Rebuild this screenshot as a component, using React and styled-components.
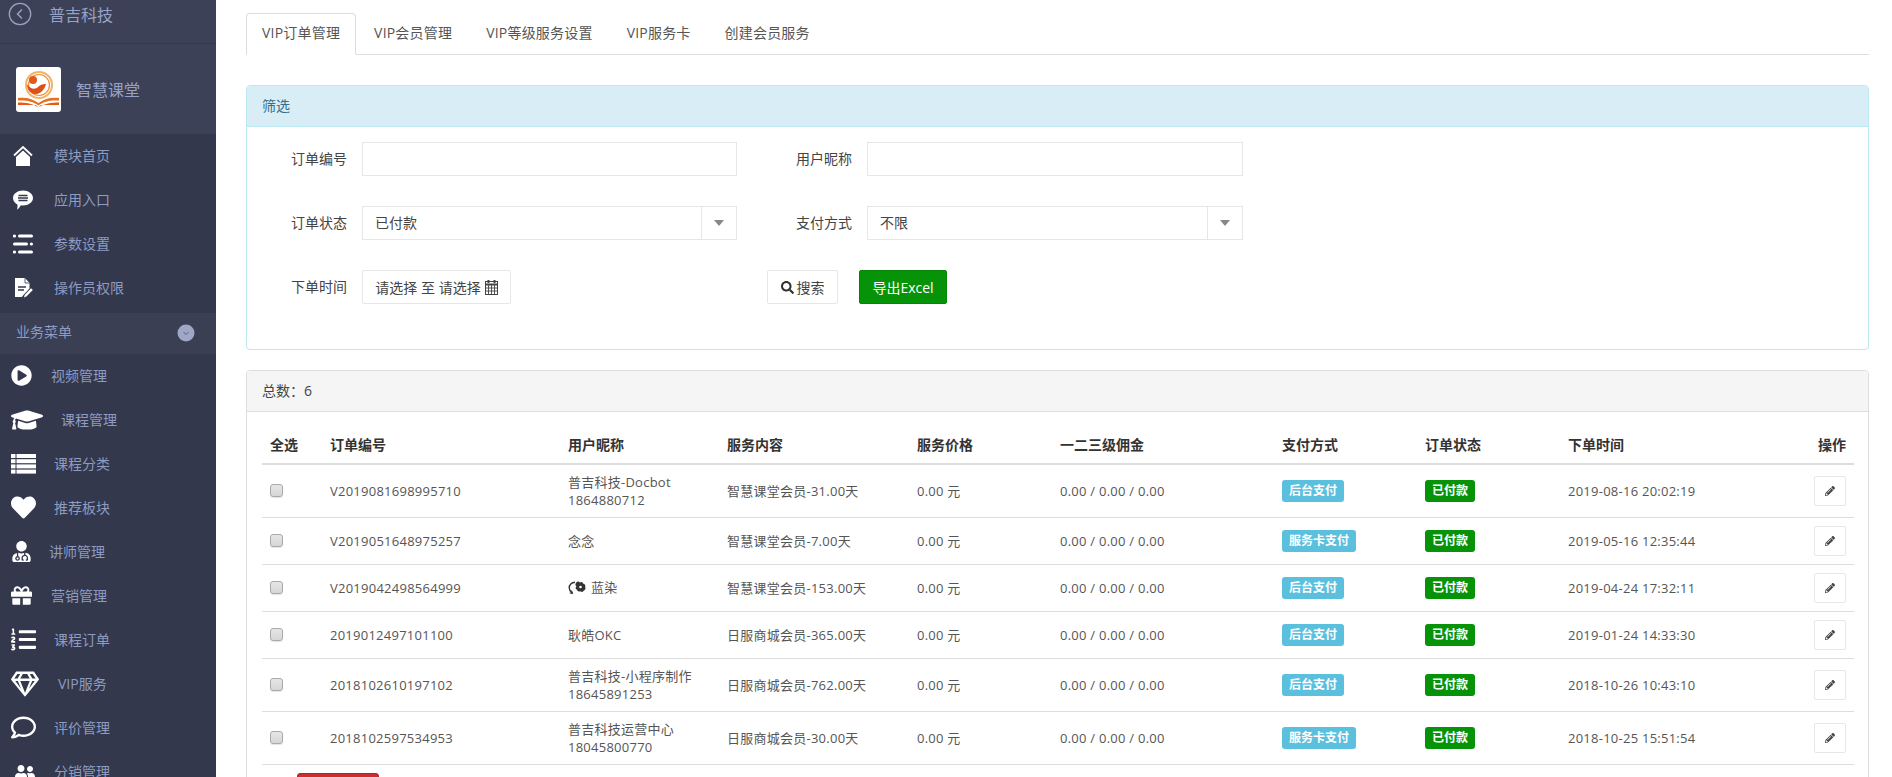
import React from "react"
import styled, { createGlobalStyle } from "styled-components"
import {
  FaPlayCircle, FaGraduationCap, FaHeart, FaUserMd, FaGift, FaListOl, FaRegGem,
  FaRegComment, FaUserFriends, FaSearch, FaPencilAlt,
} from "react-icons/fa"

const Global = createGlobalStyle`
  html, body { margin: 0; padding: 0; background: #fff; }
  body {
    font-family: "Open Sans", "Noto Sans CJK SC", sans-serif;
    font-size: 14px;
    color: #555;
  }
  * { box-sizing: border-box; }
`

// drawn icons, the fa ones from the package don't have these shapes
const HomeIcon = () => (
  <svg width="20" height="20" viewBox="0 0 20 20" fill="#fff">
    <path d="M1 9.500 10 1l9 8.500" fill="none" stroke="#fff" strokeWidth="1.800" />
    <path d="M10 4.500 17 11v9H3v-9z" />
  </svg>
)

const BubbleIcon = () => (
  <svg width="20" height="20" viewBox="0 0 20 20">
    <path d="M10 0.500c5.500 0 10 3.200 10 7.500s-4.500 7.500-10 7.500c-.8 0-1.500 0-2.200-.2C6.800 17.500 5.300 19 4 19.500c.5-1.300.6-3 .4-5C1.800 13.300 0 10.800 0 8c0-4.300 4.500-7.500 10-7.500z" fill="#fff" />
    <path d="M5.500 5.500h9M5 8h10M5.500 10.500h9" stroke="#33384c" strokeWidth="1.300" />
  </svg>
)

const LinesIcon = () => (
  <svg width="20" height="20" viewBox="0 0 20 20" fill="#fff">
    <circle cx="1.500" cy="2" r="1.600" />
    <rect x="5" y="0.500" width="15" height="3" rx="1.500" />
    <rect x="0" y="8.500" width="15" height="3" rx="1.500" />
    <circle cx="18.400" cy="10" r="1.600" />
    <circle cx="1.500" cy="18" r="1.600" />
    <rect x="5" y="16.500" width="15" height="3" rx="1.500" />
  </svg>
)

const FileEditIcon = () => (
  <svg width="19" height="20" viewBox="0 0 19 20">
    <path d="M1 0h10l4.500 5v5.500L8.500 18 8 19H1z" fill="#fff" />
    <path d="M11 0v5h4.500" fill="none" stroke="#33384c" strokeWidth=".8" />
    <path d="M4 9h8M4 12h6" stroke="#33384c" strokeWidth="1.500" />
    <path d="M10 19.500l.6-2.600 6.500-6.600 1.700 1.800-6.400 6.500z" fill="#fff" />
  </svg>
)

const FourRowsIcon = () => (
  <svg width="25" height="20" viewBox="0 0 25 20" fill="#fff">
    {[0, 5.200, 10.400, 15.600].map(y => (
      <g key={y}>
        <rect x="0" y={y} width="4.500" height="4" />
        <rect x="5.500" y={y} width="19.500" height="4" />
      </g>
    ))}
  </svg>
)

const BackIcon = () => (
  <svg width="24" height="24" viewBox="0 0 24 24" fill="none" stroke="#9aa1c2">
    <circle cx="12" cy="12" r="10.700" strokeWidth="1.300" />
    <path d="M14 7.500 9.500 12l4.500 4.500" strokeWidth="1.500" />
  </svg>
)

const DownDot = () => (
  <svg width="18" height="18" viewBox="0 0 18 18">
    <circle cx="9" cy="9" r="8.500" fill="#a0a6c6" />
    <path d="M6.500 8 9 10.500 11.500 8" fill="none" stroke="#5a6080" strokeWidth="1" />
  </svg>
)

const CalendarIcon = () => (
  <svg width="13" height="15" viewBox="0 0 13 15" fill="none" stroke="#444">
    <path d="M3.500 0v3M9.500 0v3" strokeWidth="2" />
    <rect x=".5" y="1.500" width="12" height="13" />
    <path d="M.5 4.500h12" strokeWidth="2" />
    <path d="M.5 8h12M.5 11h12M3.500 5v9M6.500 5v9M9.500 5v9" strokeWidth=".9" />
  </svg>
)

const AppLogo = () => (
  <svg width="45" height="45" viewBox="0 0 45 45">
    <rect width="45" height="45" rx="3" fill="#fff" />
    <circle cx="23" cy="18" r="13" fill="none" stroke="#f2b366" strokeWidth="2" />
    <circle cx="23" cy="18" r="10.500" fill="none" stroke="#ef8f3a" strokeWidth="1.200" />
    <circle cx="17" cy="13" r="4" fill="#e05a1c" />
    <path d="M11 17c3 5 8 6 11 3 2-2 4-3 8-3-1 5-5 9.500-10 10S11 23 11 17z" fill="#dc4f18" />
    <path d="M2 31c7-1 14 0 20.500 5C29 31 36 30 43 31v2.500c-8-.5-15 .5-20.500 5C17 34 9 33 2 33.500z" fill="#e8701f" />
    <path d="M2 35.500c8 0 15 1 20.500 5 5.500-4 13-5 20.500-5V38H25l-2.500 2.500L20 38H2z" fill="#e25c18" />
  </svg>
)

const SmallFlower = () => (
  <svg width="18" height="13" viewBox="0 0 18 13">
    <path d="M7 1.200C3.500 1.200 1.200 4 1.200 6.800c0 2 1 3.700 3 5.400" fill="none" stroke="#333" strokeWidth="1.400" />
    <path d="M3.600 9.500 4.600 12.500 1.800 12" fill="none" stroke="#333" strokeWidth="1" />
    <path d="M12 1.500a2.300 2.300 0 0 1 3.300 1.300 2.300 2.300 0 0 1 1.800 3.300 2.300 2.300 0 0 1-1.200 3.400 2.300 2.300 0 0 1-3.500.7 2.300 2.300 0 0 1-3.400-1.400 2.300 2.300 0 0 1-.6-3.500A2.300 2.300 0 0 1 12 1.500z" fill="#333" />
    <circle cx="12.500" cy="6" r="1.300" fill="#fff" />
  </svg>
)

const mainMenu = [
  { name: "模块首页", left: 13, text: 54, icon: <HomeIcon /> },
  { name: "应用入口", left: 13, text: 54, icon: <BubbleIcon /> },
  { name: "参数设置", left: 13, text: 54, icon: <LinesIcon /> },
  { name: "操作员权限", left: 14, text: 54, icon: <FileEditIcon /> },
]

const bizMenu = [
  { name: "视频管理", left: 11, text: 51, icon: <FaPlayCircle size={21} color="#fff" /> },
  { name: "课程管理", left: 11, text: 61, icon: <FaGraduationCap size={32} color="#fff" /> },
  { name: "课程分类", left: 11, text: 54, icon: <FourRowsIcon /> },
  { name: "推荐板块", left: 11, text: 54, icon: <FaHeart size={25} color="#fff" /> },
  { name: "讲师管理", left: 11, text: 49, icon: <FaUserMd size={21} color="#fff" /> },
  { name: "营销管理", left: 11, text: 51, icon: <FaGift size={21} color="#fff" /> },
  { name: "课程订单", left: 11, text: 54, icon: <FaListOl size={25} color="#fff" /> },
  { name: "VIP服务", left: 11, text: 58, icon: <FaRegGem size={28} color="#fff" /> },
  { name: "评价管理", left: 11, text: 54, icon: <FaRegComment size={25} color="#fff" /> },
  { name: "分销管理", left: 15, text: 54, icon: <FaUserFriends size={20} color="#fff" /> },
]

const orders = [
  { id: "V2019081698995710", user: ["普吉科技-Docbot", "1864880712"], service: "智慧课堂会员-31.00天", pay: "后台支付", time: "2019-08-16 20:02:19" },
  { id: "V2019051648975257", user: ["念念"], service: "智慧课堂会员-7.00天", pay: "服务卡支付", time: "2019-05-16 12:35:44" },
  { id: "V2019042498564999", user: ["蓝染"], flower: true, service: "智慧课堂会员-153.00天", pay: "后台支付", time: "2019-04-24 17:32:11" },
  { id: "2019012497101100", user: ["耿皓OKC"], service: "日服商城会员-365.00天", pay: "后台支付", time: "2019-01-24 14:33:30" },
  { id: "2018102610197102", user: ["普吉科技-小程序制作", "18645891253"], service: "日服商城会员-762.00天", pay: "后台支付", time: "2018-10-26 10:43:10" },
  { id: "2018102597534953", user: ["普吉科技运营中心", "18045800770"], service: "日服商城会员-30.00天", pay: "服务卡支付", time: "2018-10-25 15:51:54" },
]

const tabs = ["VIP订单管理", "VIP会员管理", "VIP等级服务设置", "VIP服务卡", "创建会员服务"]

const columns = [60, 238, 159, 190, 143, 222, 143, 143, 200, 94]

export default function App() {
  return (
    <Page>
      <Global />
      <Sidebar>
        <TopBar>
          <BackIcon />
          <TopTitle>普吉科技</TopTitle>
        </TopBar>
        <Brand>
          <AppLogo />
          <BrandName>智慧课堂</BrandName>
        </Brand>
        <Menu>
          {mainMenu.map(m => (
            <NavItem key={m.name} $left={m.left} $text={m.text}>
              <NavIcon>{m.icon}</NavIcon>
              {m.name}
            </NavItem>
          ))}
        </Menu>
        <GroupHead>
          <GroupLabel>业务菜单</GroupLabel>
          <DownDot />
        </GroupHead>
        <Menu>
          {bizMenu.map(m => (
            <NavItem key={m.name} $left={m.left} $text={m.text}>
              <NavIcon>{m.icon}</NavIcon>
              {m.name}
            </NavItem>
          ))}
        </Menu>
      </Sidebar>

      <Main>
        <TabBar>
          {tabs.map((t, i) => <Tab key={t} $active={i === 0}>{t}</Tab>)}
        </TabBar>

        <FilterPanel>
          <FilterHead>筛选</FilterHead>
          <FilterForm>
            <Label>订单编号</Label>
            <Input />
            <Label>用户昵称</Label>
            <Input />

            <Label>订单状态</Label>
            <Select>
              <SelectValue>已付款</SelectValue>
              <SelectArrow />
            </Select>
            <Label>支付方式</Label>
            <Select>
              <SelectValue>不限</SelectValue>
              <SelectArrow />
            </Select>

            <Label>下单时间</Label>
            <DateButton>请选择 至 请选择 <CalendarIcon /></DateButton>
            <Actions>
              <SearchButton><FaSearch size={13} color="#333" /> 搜索</SearchButton>
              <ExportButton>导出Excel</ExportButton>
            </Actions>
          </FilterForm>
        </FilterPanel>

        <ListPanel>
          <ListHead>总数：6</ListHead>
          <ListBody>
            <OrderTable>
              <colgroup>
                {columns.map((w, i) => <Col key={i} $w={w} />)}
              </colgroup>
              <thead>
                <tr>
                  <Th>全选</Th>
                  <Th>订单编号</Th>
                  <Th>用户昵称</Th>
                  <Th>服务内容</Th>
                  <Th>服务价格</Th>
                  <Th>一二三级佣金</Th>
                  <Th>支付方式</Th>
                  <Th>订单状态</Th>
                  <Th>下单时间</Th>
                  <Th $right>操作</Th>
                </tr>
              </thead>
              <tbody>
                {orders.map(o => (
                  <tr key={o.id}>
                    <Td><Check type="checkbox" /></Td>
                    <Td>{o.id}</Td>
                    <Td>
                      {o.flower && <FlowerWrap><SmallFlower /></FlowerWrap>}
                      {o.user[0]}
                      {o.user[1] && <><br />{o.user[1]}</>}
                    </Td>
                    <Td>{o.service}</Td>
                    <Td>0.00 元</Td>
                    <Td>0.00 / 0.00 / 0.00</Td>
                    <Td><Badge $color="#5bc0de">{o.pay}</Badge></Td>
                    <Td><Badge $color="#079307">已付款</Badge></Td>
                    <Td>{o.time}</Td>
                    <Td $right><EditButton><FaPencilAlt size={10} color="#444" /></EditButton></Td>
                  </tr>
                ))}
              </tbody>
            </OrderTable>
            <DeleteButton />
          </ListBody>
        </ListPanel>
      </Main>
    </Page>
  )
}

const Page = styled.div`
  display: flex;
  height: 100vh;
  overflow: hidden;
`

const Sidebar = styled.aside`
  width: 216px;
  flex: none;
  background: #33384c;
  color: #8e9bc2;
  overflow: hidden;
`

const TopBar = styled.div`
  height: 44px;
  padding: 2px 0 0 8px;
  display: flex;
  align-items: flex-start;
  gap: 17px;
  background: #3c4157;
  border-bottom: 1px solid #32364a;
`

const TopTitle = styled.span`
  font-size: 16px;
  line-height: 26px;
  color: #97a3c6;
`

const Brand = styled.div`
  height: 90px;
  padding-left: 16px;
  display: flex;
  align-items: center;
  gap: 15px;
  background: #3c4157;
`

const BrandName = styled.span`
  font-size: 16px;
  color: #97a3c6;
`

const Menu = styled.nav`
  display: block;
`

const NavItem = styled.a`
  height: 44px;
  display: grid;
  grid-template-columns: ${p => p.$text - p.$left}px 1fr;
  align-items: center;
  padding-left: ${p => p.$left}px;
  padding-bottom: 1px;
  font-size: 14px;
  line-height: 20px;
`

const NavIcon = styled.span`
  display: flex;
  align-items: center;
`

const GroupHead = styled.div`
  height: 41px;
  margin-top: 3px;
  padding: 0 21px 2px 16px;
  display: flex;
  align-items: center;
  justify-content: space-between;
  background: #3a3f54;
  font-size: 14px;
`

const GroupLabel = styled.span`
  line-height: 20px;
  padding-bottom: 2px;
`

const Main = styled.main`
  flex: 1;
  min-width: 0;
  padding: 13px 23px 0 30px;
`

const TabBar = styled.div`
  display: flex;
  gap: 2px;
  height: 42px;
  border-bottom: 1px solid #ddd;
`

const Tab = styled.a`
  height: 42px;
  padding: 9px 15px 11px;
  line-height: 20px;
  letter-spacing: .2px;
  border: 1px solid ${p => (p.$active ? "#ddd" : "transparent")};
  border-bottom-color: ${p => (p.$active ? "#fff" : "transparent")};
  border-radius: 4px 4px 0 0;
  color: #555;
`

const FilterPanel = styled.section`
  margin-top: 30px;
  height: 265px;
  border: 1px solid #bce8f1;
  border-radius: 4px;
`

const FilterHead = styled.div`
  height: 41px;
  padding: 10px 15px;
  line-height: 20px;
  background: #d9edf7;
  border-bottom: 1px solid #bce8f1;
  color: #31708f;
  border-radius: 3px 3px 0 0;
`

const FilterForm = styled.div`
  display: grid;
  grid-template-columns: 100px 375px 100px 376px;
  column-gap: 15px;
  row-gap: 30px;
  grid-auto-rows: 34px;
  padding-top: 15px;
`

const Label = styled.label`
  line-height: 34px;
  text-align: right;
  color: #444;
`

const Input = styled.input`
  height: 34px;
  border: 1px solid #e5e6e7;
  background: #fff;
  outline: none;
  width: 100%;
`

const Select = styled.div`
  height: 34px;
  display: flex;
  border: 1px solid #e5e6e7;
`

const SelectValue = styled.span`
  flex: 1;
  padding-left: 12px;
  line-height: 32px;
  color: #444;
  border-right: 1px solid #e5e6e7;
`

const SelectArrow = styled.span`
  width: 34px;
  display: flex;
  align-items: center;
  justify-content: center;
  &::after {
    content: "";
    border: 5px solid transparent;
    border-top: 6px solid #888;
    border-bottom: 0;
  }
`

const Btn = styled.button`
  height: 34px;
  border-radius: 2px;
  font: inherit;
  cursor: pointer;
`

const DateButton = styled(Btn)`
  width: 149px;
  padding: 0;
  justify-self: start;
  background: #fff;
  border: 1px solid #e7e7e7;
  color: #444;
  display: flex;
  align-items: center;
  justify-content: center;
  gap: 4px;
`

const Actions = styled.div`
  grid-column: 3 / 5;
  display: flex;
  gap: 21px;
`

const SearchButton = styled(Btn)`
  margin-left: 15px;
  width: 71px;
  padding: 0;
  background: #fff;
  border: 1px solid #e7e7e7;
  color: #444;
  display: flex;
  align-items: center;
  justify-content: center;
  gap: 3px;
`

const ExportButton = styled(Btn)`
  width: 88px;
  padding: 0;
  background: #079307;
  border: 1px solid #068506;
  color: #fff;
`

const ListPanel = styled.section`
  margin-top: 20px;
  border: 1px solid #ddd;
  border-radius: 4px;
`

const ListHead = styled.div`
  height: 41px;
  padding: 10px 15px;
  line-height: 20px;
  background: #f5f5f5;
  border-bottom: 1px solid #ddd;
  color: #444;
  border-radius: 3px 3px 0 0;
`

const ListBody = styled.div`
  padding: 15px;
`

const OrderTable = styled.table`
  width: 100%;
  table-layout: fixed;
  border-collapse: separate;
  border-spacing: 0;
`

const Col = styled.col`
  width: ${p => p.$w}px;
`

const Th = styled.th`
  padding: 8px;
  height: 38px;
  line-height: 20px;
  font-size: 14px;
  font-weight: 600;
  color: #333;
  text-align: ${p => (p.$right ? "right" : "left")};
  border-bottom: 2px solid #ddd;
  white-space: nowrap;
`

const Td = styled.td`
  padding: 8px;
  height: 47px;
  font-size: 13px;
  line-height: 18px;
  letter-spacing: .25px;
  color: #555;
  text-align: ${p => (p.$right ? "right" : "left")};
  vertical-align: middle;
  border-bottom: 1px solid #ddd;
  white-space: nowrap;
`

const Check = styled.input`
  appearance: none;
  display: block;
  width: 13px;
  height: 13px;
  margin: -2px 0 0;
  border: 1px solid #a9a9a9;
  border-radius: 3px;
  background: linear-gradient(#e6e6e6, #d6d6d6);
  box-shadow: 0 1px 1px #e4e4e4;
`

const FlowerWrap = styled.span`
  display: inline-block;
  vertical-align: -2px;
  margin-right: 5px;
`

const Badge = styled.span`
  display: inline-block;
  padding: 3px 7px;
  line-height: 16px;
  border-radius: 3px;
  background: ${p => p.$color};
  color: #fff;
  font-size: 12px;
  font-weight: 700;
  letter-spacing: 0;
`

const EditButton = styled.button`
  width: 32px;
  height: 30px;
  padding: 0;
  vertical-align: middle;
  background: #fff;
  border: 1px solid #e7e7e7;
  border-radius: 2px;
`

const DeleteButton = styled.button`
  display: block;
  margin: 8px 0 0 35px;
  width: 82px;
  height: 34px;
  background: #c9302c;
  border: 1px solid #ac2925;
  border-radius: 3px;
`
